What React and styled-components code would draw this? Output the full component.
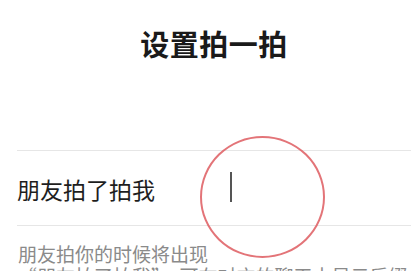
import React from "react";
import styled, { createGlobalStyle } from "styled-components";

const Global = createGlobalStyle`
  html, body { margin: 0; padding: 0; background: #ffffff; overflow: hidden; }
  body { font-family: "Noto Sans CJK SC", "Noto Sans", sans-serif; }
`;

const Page = styled.div`
  position: relative;
  width: 417px;
  height: 271px;
  overflow: hidden;
  background: #fff;
  padding: 0 6px 0 17px;
  box-sizing: border-box;
  display: flex;
  flex-direction: column;
  & > * { flex-shrink: 0; }
`;

const Title = styled.h1`
  margin: 0;
  padding-top: 29px;
  font-size: 29px;
  line-height: 29px;
  font-weight: 700;
  color: #1a1a1a;
  text-align: center;
  letter-spacing: 0.5px;
`;

const Row = styled.div`
  margin-top: 92px;
  height: 76px;
  box-sizing: border-box;
  border-top: 1px solid #e6e6e6;
  border-bottom: 1px solid #e6e6e6;
  display: flex;
  align-items: center;
`;

const Label = styled.span`
  font-size: 23px;
  line-height: 23px;
  color: #1e1e1e;
  margin-top: 3px;
`;

const Caret = styled.span`
  width: 1.5px;
  height: 30px;
  background: #555;
  margin-left: 75px;
  margin-top: -2px;
`;

const Hint = styled.p`
  margin: 17px 0 0 1px;
  font-size: 19px;
  line-height: 22px;
  color: #8a8a8a;
  white-space: nowrap;
`;

const Mark = styled.div`
  position: absolute;
  left: 200px;
  top: 136px;
  width: 125px;
  height: 122px;
  box-sizing: border-box;
  border: 2px solid rgba(222, 92, 96, 0.85);
  border-radius: 50%;
  pointer-events: none;
`;

export default function App() {
  return (
    <>
      <Global />
      <Page>
        <Title>设置拍一拍</Title>
        <Row>
          <Label>朋友拍了拍我</Label>
          <Caret />
        </Row>
        <Hint>
          朋友拍你的时候将出现
          <br />
          “朋友拍了拍我”，可在对方的聊天中显示后缀
        </Hint>
        <Mark />
      </Page>
    </>
  );
}
